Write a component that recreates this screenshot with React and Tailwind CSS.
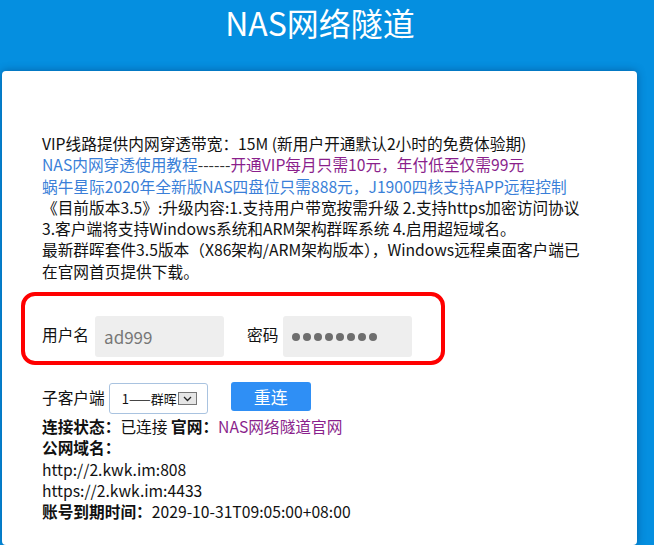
export default function App() {
  const font = { fontFamily: '"Noto Sans CJK SC", sans-serif' };
  return (
    <div className="min-h-[545px] w-full bg-[#058fe0] overflow-hidden" style={font}>
      {/* header */}
      <div className="h-[71px] flex justify-center pr-[14px]">
        <h1 className="text-[32px] leading-[44px] text-white font-normal">NAS网络隧道</h1>
      </div>

      {/* card */}
      <div className="ml-[2px] w-[635px] h-[474px] bg-white rounded-[4px] shadow-[0_0_8px_rgba(0,40,90,0.45)] pl-[40px] pt-[62px] text-[15.7px] leading-[21.3px] text-[#111]">
        <div className="whitespace-nowrap">
          <p>VIP线路提供内网穿透带宽：15M (新用户开通默认2小时的免费体验期)</p>
          <p>
            <span className="text-[#3a7fd8]">NAS内网穿透使用教程</span>
            <span className="text-[#333]">------</span>
            <span className="text-[#8a1f8c]">开通VIP每月只需10元，年付低至仅需99元</span>
          </p>
          <p className="text-[#3a7fd8]">蜗牛星际2020年全新版NAS四盘位只需888元，J1900四核支持APP远程控制</p>
          <p>《目前版本3.5》:升级内容:1.支持用户带宽按需升级 2.支持https加密访问协议</p>
          <p>3.客户端将支持Windows系统和ARM架构群晖系统 4.启用超短域名。</p>
          <p>最新群晖套件3.5版本（X86架构/ARM架构版本），Windows远程桌面客户端已</p>
          <p>在官网首页提供下载。</p>
        </div>

        {/* login box */}
        <div className="mt-[10px] -ml-[21px] w-[424px] h-[73px] border-4 border-[#ff0000] rounded-[14px] pl-[17px] pt-[20px] flex items-start">
          <span className="mt-[8px] mr-[6px]">用户名</span>
          <div className="w-[129px] h-[41px] bg-[#eeeeee] rounded-[3px] pl-[9px] flex items-center text-[17px] text-[#777]">ad999</div>
          <span className="mt-[8px] ml-[23px] mr-[5px]">密码</span>
          <div className="w-[129px] h-[41px] bg-[#eeeeee] rounded-[3px] pl-[9px] flex items-center gap-[3px]">
            {Array.from({ length: 8 }).map((_, i) => (
              <span key={i} className="w-[8px] h-[8px] rounded-full bg-[#6e6e6e]" />
            ))}
          </div>
        </div>

        {/* client select */}
        <div className="mt-[18px] flex items-start">
          <span className="mt-[4px] mr-[4px]">子客户端</span>
          <div className="w-[99px] h-[31px] border border-[#a9c3e0] rounded-[3px] bg-white flex items-center pl-[12px] text-[13px] overflow-hidden">
            <span className="whitespace-nowrap">1——群晖</span>
            <span className="ml-[1px] w-[19px] h-[13px] border border-[#777] bg-[#e6e6e6] flex items-center justify-center shrink-0">
              <svg width="9" height="6" viewBox="0 0 9 6">
                <path d="M1 1l3.5 3.5L8 1" fill="none" stroke="#222" strokeWidth="1.3" />
              </svg>
            </span>
          </div>
          <button className="ml-[23px] -mt-[1px] w-[80px] h-[29px] bg-[#2f8ff5] rounded-[3px] text-white text-[17px] leading-[29px]">重连</button>
        </div>

        <div className="mt-[2px] whitespace-nowrap">
          <p>
            <b>连接状态：</b>已连接 <b>官网：</b>
            <span className="text-[#8a1f8c]">NAS网络隧道官网</span>
          </p>
          <p><b>公网域名：</b></p>
          <p>http://2.kwk.im:808</p>
          <p>https://2.kwk.im:4433</p>
          <p><b>账号到期时间：</b>2029-10-31T09:05:00+08:00</p>
        </div>
      </div>
    </div>
  );
}
